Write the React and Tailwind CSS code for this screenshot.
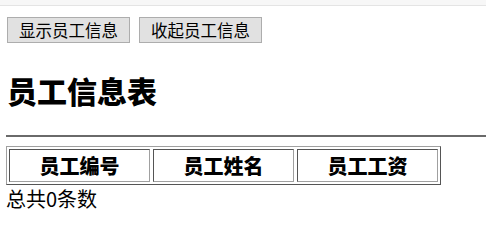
import React from 'react';

const cjk = { fontFamily: '"Noto Sans CJK SC", "Noto Sans", sans-serif' };

export default function App() {
  const headers = ['员工编号', '员工姓名', '员工工资'];
  return (
    <div className="w-[486px] h-[250px] bg-white text-black overflow-hidden" style={cjk}>
      <div className="h-[6px] bg-[#f7f7f7] border-b border-[#e4e4e4]" />
      <div className="pl-[7px] pt-[11px]">
        <div className="flex gap-[9px]">
          <button className="w-[123px] h-[26px] bg-[#e1e1e1] border border-[#adadad] text-[16.5px] leading-none">
            显示员工信息
          </button>
          <button className="w-[123px] h-[26px] bg-[#e1e1e1] border border-[#adadad] text-[16.5px] leading-none">
            收起员工信息
          </button>
        </div>
        <h2 className="mt-[29px] text-[30px] font-black leading-[36px]">员工信息表</h2>
      </div>
      <div className="ml-[6px] mt-[27px] h-[2px] bg-[#6a6a6a]" />
      <div className="ml-[6px] mt-[9px] w-[435px] border border-t-[#a0a0a0] border-l-[#a0a0a0] border-r-[#555] border-b-[#555] p-[2px] flex gap-[3px]">
        {headers.map((h) => (
          <div
            key={h}
            className="flex-1 h-[33px] border border-t-[#555] border-l-[#555] border-r-[#a0a0a0] border-b-[#a0a0a0] flex items-center justify-center text-[20px] font-black leading-none"
          >
            {h}
          </div>
        ))}
      </div>
      <div className="ml-[6px] text-[20px] leading-[28px]">总共0条数</div>
    </div>
  );
}
